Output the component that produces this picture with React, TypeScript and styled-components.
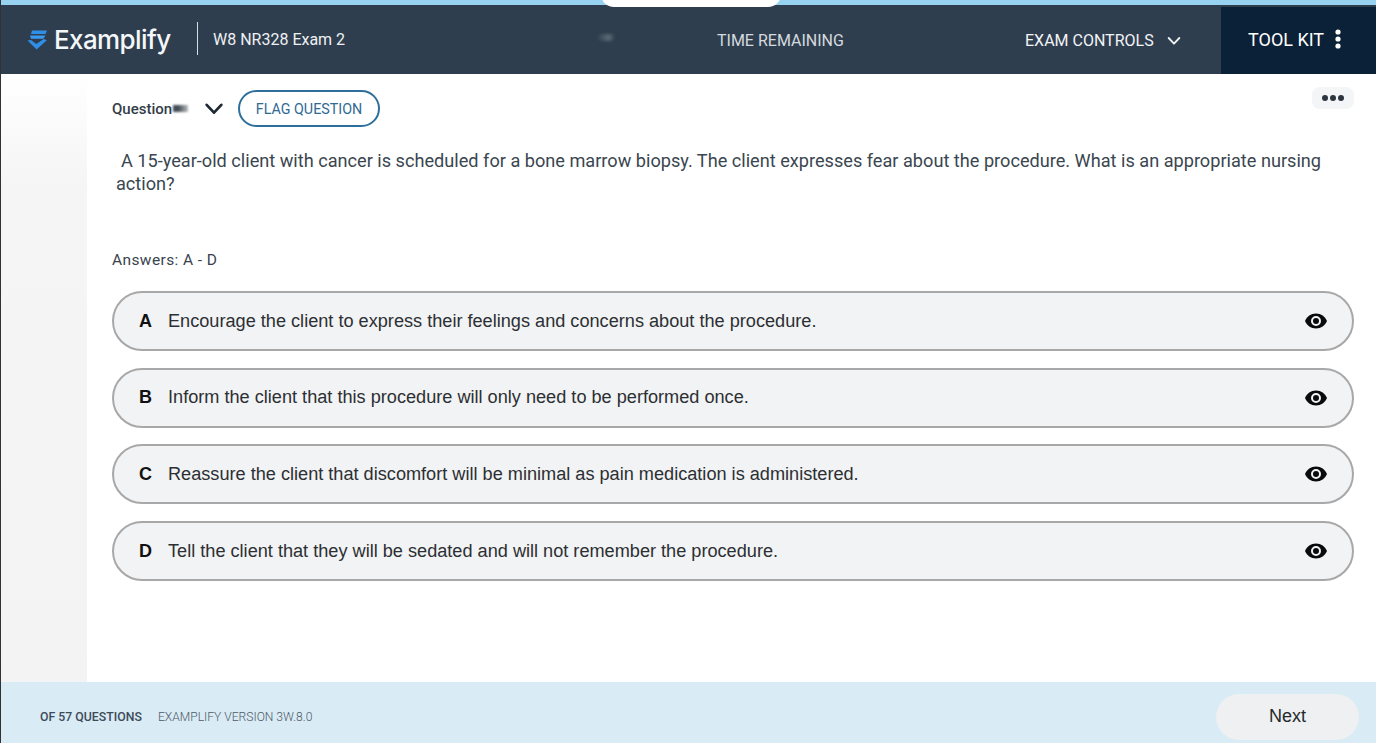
import styled, { createGlobalStyle } from 'styled-components'

const GlobalStyle = createGlobalStyle`
  html, body {
    margin: 0;
    padding: 0;
    background: #fff;
  }
  * {
    box-sizing: border-box;
  }
`

const Page = styled.div`
  width: 1376px;
  height: 743px;
  display: flex;
  flex-direction: column;
  overflow: hidden;
  position: relative;
  border-left: 1px solid #2f3338;
  font-family: Roboto, 'Liberation Sans', sans-serif;
`

const TopStrip = styled.div`
  height: 5px;
  flex: none;
  background: #97d3f1;
`

const TimerTab = styled.div`
  position: absolute;
  top: -6px;
  left: 600px;
  width: 180px;
  height: 13px;
  background: #fff;
  border-radius: 0 0 30px 30px;
`

const TimerSmudge = styled.div`
  position: absolute;
  top: 34px;
  left: 596px;
  width: 20px;
  height: 7px;
  border-radius: 50%;
  background: linear-gradient(90deg, #33424f, #5d6c78 60%, #222e3a);
  filter: blur(1.5px);
`

const Header = styled.header`
  height: 69px;
  flex: none;
  display: flex;
  align-items: stretch;
  background: #2f3e4e;
  color: #fff;
`

const Brand = styled.div`
  width: 196px;
  padding-left: 26px;
  display: flex;
  align-items: center;
  gap: 6px;
`

const BrandName = styled.span`
  font-family: Inter, Roboto, sans-serif;
  font-size: 26px;
  font-weight: 500;
  letter-spacing: -0.6px;
  color: #f4f7f9;
`

const ExamName = styled.div`
  width: 504px;
  height: 33px;
  align-self: center;
  margin-top: -3px;
  border-left: 1px solid #d8dde2;
  padding: 2px 0 0 15px;
  display: flex;
  align-items: center;
  font-size: 16px;
  font-weight: 400;
  color: #eef1f3;
`

const TimeLabel = styled.div`
  width: 324px;
  padding: 2px 0 0 16px;
  display: flex;
  align-items: center;
  font-size: 16px;
  color: #d4dadf;
`

const Controls = styled.div`
  width: 196px;
  padding-top: 2px;
  display: flex;
  align-items: center;
  gap: 12px;
  font-size: 16px;
  color: #f2f4f6;
`

const ToolKit = styled.div`
  flex: 1;
  margin-top: 2px;
  padding: 0 0 3px 27px;
  display: flex;
  align-items: center;
  gap: 10px;
  background: #0b2138;
  font-size: 18px;
  color: #fff;
`

const Body = styled.div`
  flex: 1;
  display: flex;
`

const Sidebar = styled.aside`
  width: 86px;
  flex: none;
  background: linear-gradient(180deg, #fff 0%, #f5f5f5 18%, #f3f3f3 100%);
`

const Content = styled.main`
  flex: 1;
  padding: 16px 22px 0 25px;
  background: #fff;
  display: flex;
  flex-direction: column;
`

const QuestionBar = styled.div`
  height: 37px;
  display: flex;
  align-items: center;
  gap: 13px;
`

const QuestionLabel = styled.span`
  width: 78px;
  display: flex;
  align-items: center;
  gap: 1px;
  font-size: 15px;
  font-weight: 500;
  color: #333d47;
`

const QuestionSmudge = styled.span`
  width: 15px;
  height: 7px;
  background: linear-gradient(90deg, #444c54 0 35%, #b8bcc0 100%);
  filter: blur(0.8px);
`

const FlagButton = styled.button`
  width: 142px;
  height: 37px;
  border: 2px solid #2f6f9c;
  border-radius: 19px;
  background: #fff;
  font-family: inherit;
  font-size: 14.3px;
  font-weight: 400;
  color: #2f6a94;
  padding: 0;
`

const MoreButton = styled.div`
  width: 42px;
  height: 22px;
  margin-left: auto;
  margin-top: -22px;
  border-radius: 8px;
  background: #f3f5f6;
  display: flex;
  align-items: center;
  justify-content: center;
  gap: 2px;
`

const Dot = styled.span`
  width: 6px;
  height: 6px;
  border-radius: 50%;
  background: #2d3640;
`

const QuestionText = styled.p`
  margin: 23px 0 0 4px;
  width: 1216px;
  font-size: 18.15px;
  line-height: 22.5px;
  color: #3a4650;
  text-indent: 5px;
`

const AnswersLabel = styled.div`
  margin-top: 55px;
  font-size: 15.5px;
  line-height: 20px;
  letter-spacing: 0.4px;
  color: #39434d;
`

const AnswerList = styled.div`
  margin-top: 21px;
  display: flex;
  flex-direction: column;
  gap: 16.7px;
`

const Answer = styled.div`
  height: 60px;
  padding: 0 24px 0 25px;
  border: 2px solid #a8a8a8;
  border-radius: 30px;
  background: #f2f3f4;
  display: flex;
  align-items: center;
`

const AnswerLetter = styled.span`
  width: 29px;
  flex: none;
  font-family: 'Liberation Sans', Arial, sans-serif;
  font-size: 18px;
  font-weight: 700;
  color: #111;
`

const AnswerText = styled.span`
  flex: 1;
  font-family: 'Liberation Sans', Arial, sans-serif;
  font-size: 18.15px;
  color: #2c2f33;
`

const Footer = styled.footer`
  height: 61px;
  flex: none;
  padding: 8px 17px 0 39px;
  background: #d9ebf5;
  display: flex;
  align-items: center;
`

const QuestionCount = styled.span`
  font-size: 12.3px;
  font-weight: 500;
  color: #3d4a57;
`

const Version = styled.span`
  margin-left: 16px;
  font-size: 12.1px;
  font-weight: 300;
  color: #4e5a66;
`

const NextButton = styled.button`
  width: 143px;
  height: 46px;
  margin-left: auto;
  border: 0;
  border-radius: 23px;
  background: #eef0f1;
  font-family: 'Liberation Sans', Arial, sans-serif;
  font-size: 18px;
  color: #26292c;
  padding: 0;
`

const Logo = () => (
  <svg width="21" height="20" viewBox="0 0 21 20">
    <path d="M5 0.5h15l-1.5 3.4H4z" fill="#2f8fe8" />
    <path d="M3 5.5h15.5l-2.2 3.2L4 8.7z" fill="#3a9af2" />
    <path d="M0.5 10.5l3.5-.6 5.2 4.2 7.6-5 3 1.2L9.6 19.5z" fill="#2f8fe8" />
  </svg>
)

const Chevron = ({ size, color, weight }: { size: number; color: string; weight: number }) => (
  <svg width={size} height={size} viewBox="0 0 24 24" fill="none">
    <path d="M4 7.5l8 8.5 8-8.5" stroke={color} strokeWidth={weight} strokeLinecap="round" strokeLinejoin="round" />
  </svg>
)

const Kebab = () => (
  <svg width="8" height="20" viewBox="0 0 8 20" fill="#fff">
    <circle cx="4" cy="3" r="2.6" />
    <circle cx="4" cy="10" r="2.6" />
    <circle cx="4" cy="17" r="2.6" />
  </svg>
)

const Eye = () => (
  <svg width="24" height="24" viewBox="0 0 24 24" fill="#0b0b0b">
    <path d="M12 4.5C7 4.5 2.7 7.6 1 12c1.7 4.4 6 7.5 11 7.5s9.3-3.1 11-7.5c-1.7-4.4-6-7.5-11-7.5zM12 17a5 5 0 1 1 0-10 5 5 0 0 1 0 10zm0-8a3 3 0 1 0 0 6 3 3 0 0 0 0-6z" />
  </svg>
)

const answers = [
  { letter: 'A', text: 'Encourage the client to express their feelings and concerns about the procedure.' },
  { letter: 'B', text: 'Inform the client that this procedure will only need to be performed once.' },
  { letter: 'C', text: 'Reassure the client that discomfort will be minimal as pain medication is administered.' },
  { letter: 'D', text: 'Tell the client that they will be sedated and will not remember the procedure.' },
]

const App = () => (
  <Page>
    <GlobalStyle />
    <TopStrip />
    <TimerTab />
    <Header>
      <Brand>
        <Logo />
        <BrandName>Examplify</BrandName>
      </Brand>
      <ExamName>W8 NR328 Exam 2</ExamName>
      <TimeLabel>TIME REMAINING</TimeLabel>
      <Controls>
        EXAM CONTROLS
        <Chevron size={16} color="#eef1f3" weight={2.8} />
      </Controls>
      <ToolKit>
        TOOL KIT
        <Kebab />
      </ToolKit>
    </Header>
    <TimerSmudge />
    <Body>
      <Sidebar />
      <Content>
        <QuestionBar>
          <QuestionLabel>
            Question
            <QuestionSmudge />
          </QuestionLabel>
          <Chevron size={22} color="#1f2933" weight={3} />
          <FlagButton>FLAG QUESTION</FlagButton>
          <MoreButton>
            <Dot />
            <Dot />
            <Dot />
          </MoreButton>
        </QuestionBar>
        <QuestionText>
          A 15-year-old client with cancer is scheduled for a bone marrow biopsy. The client expresses fear about the
          procedure. What is an appropriate nursing action?
        </QuestionText>
        <AnswersLabel>Answers: A - D</AnswersLabel>
        <AnswerList>
          {answers.map((a) => (
            <Answer key={a.letter}>
              <AnswerLetter>{a.letter}</AnswerLetter>
              <AnswerText>{a.text}</AnswerText>
              <Eye />
            </Answer>
          ))}
        </AnswerList>
      </Content>
    </Body>
    <Footer>
      <QuestionCount>OF 57 QUESTIONS</QuestionCount>
      <Version>EXAMPLIFY VERSION 3W.8.0</Version>
      <NextButton>Next</NextButton>
    </Footer>
  </Page>
)

export default App
